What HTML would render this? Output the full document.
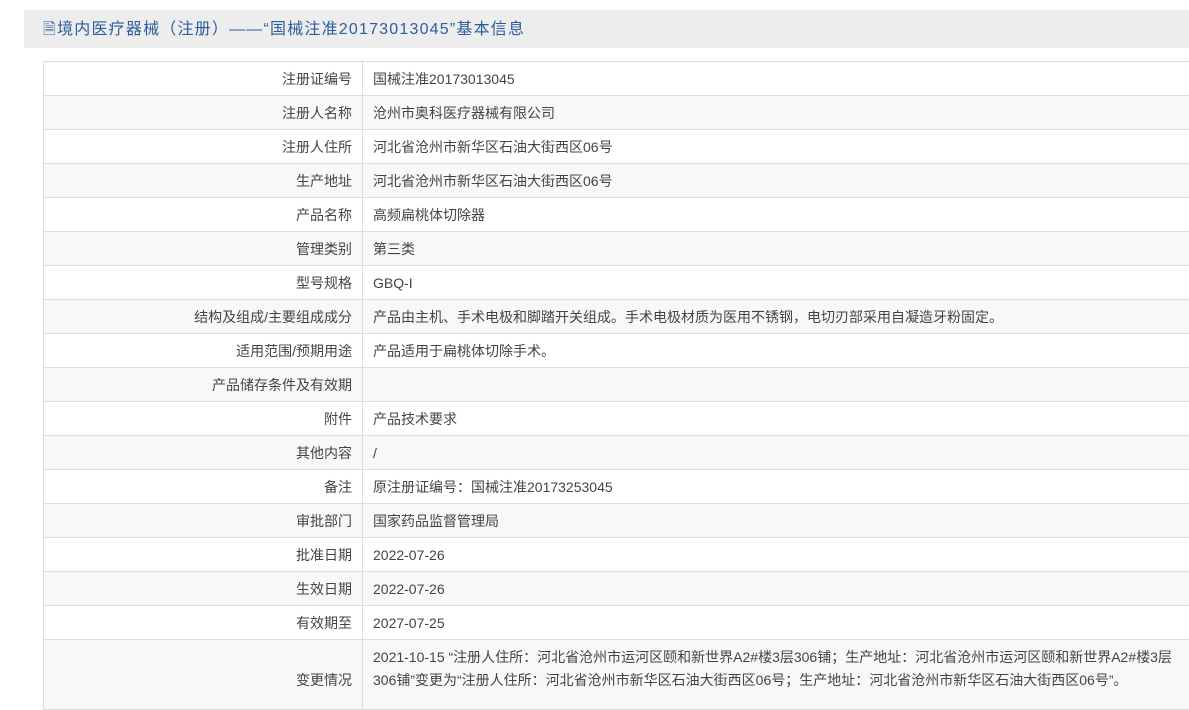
<!DOCTYPE html>
<html><head><meta charset="utf-8"><style>
body{margin:0;background:#fff;font-family:"Liberation Sans","Noto Sans CJK SC",sans-serif;width:1189px;height:694px;overflow:hidden;position:relative}
.hd{position:absolute;left:24px;top:10px;width:1200px;height:38px;background:#ededed;color:#2b5c9e;font-size:16px;line-height:40px;padding-left:19px;box-sizing:border-box;white-space:nowrap;letter-spacing:1.2px}
table{position:absolute;left:43px;top:61px;width:1200px;border-collapse:collapse;font-size:14px;color:#444}
td{border:1px solid #ddd;height:34px;padding:0 10px;box-sizing:border-box}
td.l{width:319px;text-align:right}
tr:nth-child(even){background:#f8f8f8}
tr.big td{height:70px;line-height:23px;padding-top:6px;vertical-align:top}
tr.big td.l{padding-top:29px}
</style></head><body>
<div class="hd">🗎境内医疗器械（注册）——“国械注准20173013045”基本信息</div>
<table>
<tr><td class="l">注册证编号</td><td>国械注准20173013045</td></tr>
<tr><td class="l">注册人名称</td><td>沧州市奥科医疗器械有限公司</td></tr>
<tr><td class="l">注册人住所</td><td>河北省沧州市新华区石油大街西区06号</td></tr>
<tr><td class="l">生产地址</td><td>河北省沧州市新华区石油大街西区06号</td></tr>
<tr><td class="l">产品名称</td><td>高频扁桃体切除器</td></tr>
<tr><td class="l">管理类别</td><td>第三类</td></tr>
<tr><td class="l">型号规格</td><td>GBQ-I</td></tr>
<tr><td class="l">结构及组成/主要组成成分</td><td>产品由主机、手术电极和脚踏开关组成。手术电极材质为医用不锈钢，电切刃部采用自凝造牙粉固定。</td></tr>
<tr><td class="l">适用范围/预期用途</td><td>产品适用于扁桃体切除手术。</td></tr>
<tr><td class="l">产品储存条件及有效期</td><td></td></tr>
<tr><td class="l">附件</td><td>产品技术要求</td></tr>
<tr><td class="l">其他内容</td><td>/</td></tr>
<tr><td class="l">备注</td><td>原注册证编号：国械注准20173253045</td></tr>
<tr><td class="l">审批部门</td><td>国家药品监督管理局</td></tr>
<tr><td class="l">批准日期</td><td>2022-07-26</td></tr>
<tr><td class="l">生效日期</td><td>2022-07-26</td></tr>
<tr><td class="l">有效期至</td><td>2027-07-25</td></tr>
<tr class="big"><td class="l">变更情况</td><td style="white-space:nowrap">2021-10-15 “注册人住所：河北省沧州市运河区颐和新世界A2#楼3层306铺；生产地址：河北省沧州市运河区颐和新世界A2#楼3层<br>306铺”变更为“注册人住所：河北省沧州市新华区石油大街西区06号；生产地址：河北省沧州市新华区石油大街西区06号”。</td></tr>
</table>
</body></html>
